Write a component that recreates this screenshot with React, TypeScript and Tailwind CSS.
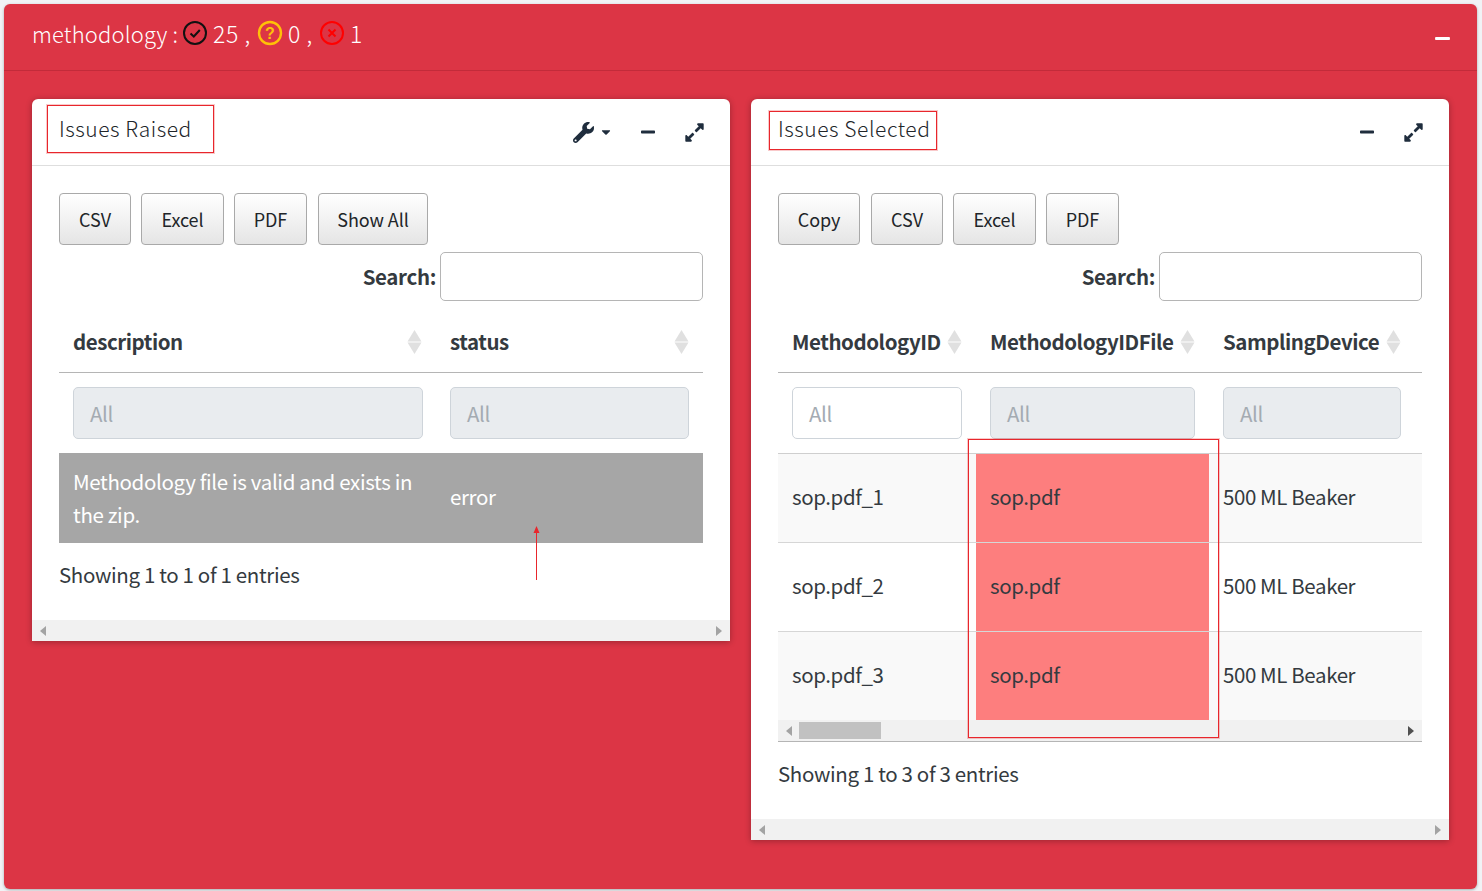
import { FaWrench, FaCaretDown, FaMinus, FaExpandAlt } from "react-icons/fa";

const Diamond = () => (
  <svg width="15" height="24" viewBox="0 0 15 24" className="shrink-0">
    <path d="M7.5 0 L14.5 11.5 H0.5 Z" fill="#e0e0e0" />
    <path d="M7.5 24 L14.5 12.5 H0.5 Z" fill="#e0e0e0" />
  </svg>
);

const Btn = ({ label, w }: { label: string; w: string }) => (
  <button className={`${w} h-[52px] pb-[1px] rounded-[4px] border border-[#a9a9a9] bg-gradient-to-b from-white to-[#e5e5e5] text-[18px] tracking-[-0.1px] leading-none text-[#212529]`}>
    {label}
  </button>
);

const Filter = ({ white }: { white?: boolean }) => (
  <div className={`h-[52px] rounded-[5px] border border-[#ced4da] pl-[16px] pt-[2px] flex items-center text-[20.5px] tracking-[-0.35px] text-[#a4abb2] ${white ? "bg-white" : "bg-[#e9ecef]"}`}>
    All
  </div>
);

const Track = ({ thumb }: { thumb?: boolean }) => (
  <div className="h-[21px] bg-[#f1f1f1] flex items-center justify-between px-[8px] shrink-0 relative">
    <svg width="6" height="10" viewBox="0 0 6 10"><path d="M6 0V10L0 5Z" fill="#a3a3a3" /></svg>
    {thumb && <div className="absolute left-[21px] top-[2px] w-[82px] h-[17px] bg-[#c1c1c1]" />}
    <svg width="6" height="10" viewBox="0 0 6 10"><path d="M0 0V10L6 5Z" fill={thumb ? "#505050" : "#a3a3a3"} /></svg>
  </div>
);

const Search = () => (
  <div className="flex justify-end items-center mt-[7px] h-[49px] gap-[4px]">
    <span className="text-[20.5px] tracking-[-0.35px] font-bold text-[#343a40]">Search:</span>
    <div className="w-[263px] h-[49px] rounded-[5px] border border-[#b5b5b5] bg-white" />
  </div>
);

const HeaderTools = ({ wrench }: { wrench?: boolean }) => (
  <div className="flex items-center text-[#1f2d3d]">
    {wrench && (
      <span className="flex items-center mr-[27px]">
        <FaWrench className="w-[21px] h-[21px]" />
        <FaCaretDown className="w-[14px] h-[14px] ml-[5px]" />
      </span>
    )}
    <FaMinus className="w-[16px] h-[16px] mr-[28px]" />
    <FaExpandAlt className="w-[21px] h-[21px]" />
  </div>
);

function Card({ title, wrench, children, boxClass }: { title: string; wrench?: boolean; children: React.ReactNode; boxClass: string }) {
  return (
    <div className="w-[698px] bg-white rounded-t-[6px] shadow-[0_1px_6px_rgba(0,0,0,0.3)] flex flex-col relative">
      <div className="h-[67px] border-b border-[#dedede] flex items-center justify-between pl-[27px] pr-[25px] shrink-0">
        <span className="text-[21px] font-light tracking-[0.55px] text-[#212529] -mt-[6px]">{title}</span>
        <div><HeaderTools wrench={wrench} /></div>
      </div>
      <div className={`absolute border border-[#e8262c] shadow-[0_0_0_1px_rgba(232,38,44,0.25)] ${boxClass}`} />
      {children}
    </div>
  );
}

const Th = ({ label, cls }: { label: string; cls: string }) => (
  <th className={`${cls} px-[14px] font-bold text-left text-[20.5px] tracking-[-0.45px] text-[#343a40]`}>
    <div className="flex items-center justify-between whitespace-nowrap">{label}<Diamond /></div>
  </th>
);

export default function App() {
  return (
    <div className="w-[1482px] h-[891px] bg-[#f1f3f6] pt-[4px] pl-[4px] overflow-hidden font-['Noto_Sans_CJK_SC','Liberation_Sans',sans-serif] text-[#343a40] leading-[1.5]">
      <div className="w-[1473px] h-[885px] bg-[#dc3545] rounded-[6px] shadow-[0_1px_3px_rgba(0,0,0,0.3)]">
        <div className="h-[67px] border-b border-[#c22b3a] flex items-center justify-between pl-[28px] pr-[26px] text-white">
          <div className="flex items-center text-[22px] font-light tracking-[0.15px] -mt-[8px]">
            <span>methodology :</span>
            <svg width="26" height="26" viewBox="0 0 26 26" className="ml-[4px]" fill="none">
              <circle cx="13" cy="13" r="11" stroke="#111" strokeWidth="2" />
              <path d="M8.5 13.5 L11.8 16.5 L17.8 10" stroke="#111" strokeWidth="2" />
            </svg>
            <span className="ml-[5px] text-[23px] tracking-[0.6px]">25 ,</span>
            <svg width="26" height="26" viewBox="0 0 26 26" className="ml-[6px]" fill="none">
              <circle cx="13" cy="13" r="11" stroke="#ffc107" strokeWidth="2.4" />
              <text x="13" y="18.5" textAnchor="middle" fontSize="16" fontWeight="700" fill="#ffc107" fontFamily="Liberation Sans">?</text>
            </svg>
            <span className="ml-[5px] text-[23px] tracking-[0.6px]">0 ,</span>
            <svg width="26" height="26" viewBox="0 0 26 26" className="ml-[6px]" fill="none">
              <circle cx="13" cy="13" r="11" stroke="#ff0000" strokeWidth="2" />
              <path d="M9.5 9.5 L16.5 16.5 M16.5 9.5 L9.5 16.5" stroke="#ff0000" strokeWidth="2" />
            </svg>
            <span className="ml-[5px] text-[23px]">1</span>
          </div>
          <FaMinus className="w-[17px] h-[17px] mt-[3px]" />
        </div>
        <div className="flex items-start gap-[21px] pl-[28px] pt-[28px]">
          <Card title="Issues Raised" wrench boxClass="left-[15px] top-[6px] w-[167px] h-[48px]">
            <div className="px-[27px] pt-[27px]">
              <div className="flex gap-[10px]">
                <Btn label="CSV" w="w-[72px]" />
                <Btn label="Excel" w="w-[83px]" />
                <Btn label="PDF" w="w-[73px]" />
                <div className="ml-[1px]"><Btn label="Show All" w="w-[110px]" /></div>
              </div>
              <Search />
              <table className="w-[644px] table-fixed border-collapse text-[20.5px] tracking-[-0.35px]">
                <colgroup><col className="w-[377px]" /><col className="w-[267px]" /></colgroup>
                <thead>
                  <tr className="h-[71px] border-b border-[#b5b5b5]">
                    <Th label="description" cls="pt-[11px]" />
                    <Th label="status" cls="pt-[11px]" />
                  </tr>
                  <tr className="h-[81px]">
                    <td className="pl-[14px] pr-[13px]"><Filter /></td>
                    <td className="px-[14px]"><Filter /></td>
                  </tr>
                </thead>
                <tbody>
                  <tr className="h-[90px] bg-[#a6a6a6] text-white">
                    <td className="px-[14px] leading-[33px]">Methodology file is valid and exists in the zip.</td>
                    <td className="px-[14px] pb-[4px]">error</td>
                  </tr>
                </tbody>
              </table>
              <div className="h-[77px] pt-[16px] text-[20.5px] tracking-[-0.35px]">Showing 1 to 1 of 1 entries</div>
            </div>
            <Track />
            <svg width="8" height="55" viewBox="0 0 8 55" className="absolute left-[500px] top-[427px]">
              <path d="M4.5 6V54" stroke="#e8262c" strokeWidth="1" />
              <path d="M4.5 0 L7.5 7 H1.5 Z" fill="#e8262c" />
            </svg>
          </Card>
          <Card title="Issues Selected" boxClass="left-[18px] top-[12px] w-[168px] h-[39px]">
            <div className="px-[27px] pt-[27px]">
              <div className="flex gap-[10px]">
                <div className="mr-[1px]"><Btn label="Copy" w="w-[82px]" /></div>
                <Btn label="CSV" w="w-[72px]" />
                <Btn label="Excel" w="w-[83px]" />
                <Btn label="PDF" w="w-[73px]" />
              </div>
              <Search />
              <div className="w-[644px] overflow-hidden border-b border-[#b5b5b5]">
                <table className="w-[644px] table-fixed border-collapse text-[20.5px] tracking-[-0.4px]">
                  <colgroup>
                    <col className="w-[198px]" /><col className="w-[233px]" /><col className="w-[206px]" /><col className="w-[7px]" />
                  </colgroup>
                  <thead>
                    <tr className="h-[71px] border-b border-[#b5b5b5]">
                      <Th label="MethodologyID" cls="pt-[11px]" />
                      <Th label="MethodologyIDFile" cls="pt-[11px]" />
                      <Th label="SamplingDevice" cls="pt-[11px]" />
                      <th />
                    </tr>
                    <tr className="h-[81px] border-b border-[#cfcfcf]">
                      <td className="px-[14px]"><Filter white /></td>
                      <td className="px-[14px]"><Filter /></td>
                      <td className="px-[14px]"><Filter /></td>
                      <td />
                    </tr>
                  </thead>
                  <tbody>
                    {["sop.pdf_1", "sop.pdf_2", "sop.pdf_3"].map((id) => (
                      <tr key={id} className="h-[89px] bg-[#f9f9f9] even:bg-white border-b border-[#d6d6d6] last:border-b-0">
                        <td className="px-[14px] pb-[2px]">{id}</td>
                        <td className="px-[14px] pb-[2px] bg-[#fd7e7e]">sop.pdf</td>
                        <td className="px-[14px] pb-[2px]">500 ML Beaker</td>
                        <td />
                      </tr>
                    ))}
                  </tbody>
                </table>
                <Track thumb />
              </div>
              <div className="h-[77px] pt-[16px] text-[20.5px] tracking-[-0.35px]">Showing 1 to 3 of 3 entries</div>
            </div>
            <Track />
            <div className="absolute left-[217px] top-[340px] w-[251px] h-[299px] border border-[#e8262c] shadow-[0_0_0_1px_rgba(232,38,44,0.25)]" />
          </Card>
        </div>
      </div>
    </div>
  );
}
